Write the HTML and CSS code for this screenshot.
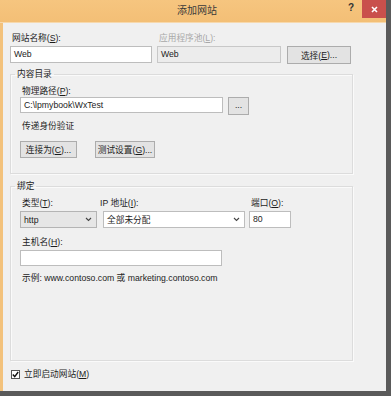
FILE: index.html
```html
<!DOCTYPE html>
<html lang="zh-CN">
<head>
<meta charset="utf-8">
<title>添加网站</title>
<link rel="stylesheet" href="styles.css">
</head>
<body>
<div class="dialog">
  <div class="titlebar">
    <span class="spacer"></span>
    <span class="title">添加网站</span>
    <div class="controls">
      <span class="help">?</span>
      <span class="close"><svg width="7" height="7" viewBox="0 0 7 7"><path d="M1 1L6 6M6 1L1 6" stroke="#fff" stroke-width="1.6"/></svg></span>
    </div>
  </div>
  <div class="body">
    <div class="row1">
      <div class="field">
        <label class="lbl">网站名称(<u>S</u>):</label>
        <div class="input">Web</div>
      </div>
      <div class="field">
        <label class="lbl disabled">应用程序池(<u>L</u>):</label>
        <div class="input gray">Web</div>
      </div>
      <div class="btn choose">选择(<u>E</u>)...</div>
    </div>

    <fieldset class="group g1">
      <legend>内容目录</legend>
      <label class="lbl">物理路径(<u>P</u>):</label>
      <div class="pathrow">
        <div class="input path">C:\lpmybook\WxTest</div>
        <div class="btn dots">...</div>
      </div>
      <div class="lbl auth">传递身份验证</div>
      <div class="btnrow">
        <div class="btn b1">连接为(<u>C</u>)...</div>
        <div class="btn b2">测试设置(<u>G</u>)...</div>
      </div>
    </fieldset>

    <fieldset class="group g2">
      <legend>绑定</legend>
      <div class="bindgrid">
        <label class="lbl">类型(<u>T</u>):</label>
        <label class="lbl ip">IP 地址(<u>I</u>):</label>
        <label class="lbl">端口(<u>O</u>):</label>
        <div class="select gray"><span>http</span><svg width="7" height="5" viewBox="0 0 7 5"><path d="M1 1L3.5 3.5L6 1" fill="none" stroke="#444" stroke-width="1.1"/></svg></div>
        <div class="select"><span>全部未分配</span><svg width="7" height="5" viewBox="0 0 7 5"><path d="M1 1L3.5 3.5L6 1" fill="none" stroke="#444" stroke-width="1.1"/></svg></div>
        <div class="input port">80</div>
      </div>
      <label class="lbl host">主机名(<u>H</u>):</label>
      <div class="input hostin"></div>
      <div class="lbl example">示例: www.contoso.com 或 marketing.contoso.com</div>
    </fieldset>

    <div class="checkrow">
      <span class="check"><svg width="7" height="7" viewBox="0 0 7 7"><path d="M0.8 3.6L2.7 5.6L6.2 1" fill="none" stroke="#111" stroke-width="1.4"/></svg></span>
      <span class="lbl">立即启动网站(<u>M</u>)</span>
    </div>
  </div>
</div>
</body>
</html>
```

FILE: styles.css
```css
* { box-sizing: border-box; }
html, body { margin: 0; padding: 0; background: #f0f0f0; }
body {
  font-family: "Liberation Sans", "Noto Sans CJK SC", sans-serif;
  font-size: 8.7px;
  color: #1c1c1c;
}
u { text-decoration: underline; text-underline-offset: 1px; }

.dialog {
  width: 391px;
  height: 396px;
  display: flex;
  flex-direction: column;
  border-right: 5px solid #5a5a5a;
  border-bottom: 5px solid #5a5a5a;
  background: #f0f0f0;
}

.titlebar {
  height: 23px;
  flex: none;
  display: grid;
  grid-template-columns: 1fr auto 1fr;
  align-items: start;
  background: linear-gradient(#f6c57f, #f3bf76);
  border-bottom: 1px solid #f7d9ad;
}
.title {
  font-size: 10px;
  line-height: 22px;
  color: #3a3a3a;
  padding-left: 8px;
}
.controls {
  justify-self: end;
  display: flex;
  align-items: start;
}
.help {
  font-weight: bold;
  font-size: 10px;
  line-height: 16px;
  color: #333;
  width: 18px;
  text-align: center;
  margin-right: 2px;
}
.close {
  width: 24px;
  height: 18px;
  background: #c9504c;
  display: flex;
  align-items: center;
  justify-content: center;
}

.body {
  flex: 1;
  display: flex;
  flex-direction: column;
  border-left: 3px solid #f3c27c;
  padding: 9px 0 0 7px;
}

.lbl { display: block; line-height: 12px; padding-left: 2px; white-space: nowrap; }
.lbl.disabled { color: #a8a8a8; }

.row1 {
  display: grid;
  grid-template-columns: 142px 124px 65px;
  column-gap: 5px;
  align-items: end;
}
.row1 .choose { margin-left: 1px; margin-bottom: -1px; }
.field { display: flex; flex-direction: column; gap: 2px; }

.input {
  height: 17px;
  border: 1px solid #bdbdbd;
  background: #fff;
  line-height: 15px;
  padding-left: 3px;
  white-space: nowrap;
}
.input.gray { background: #ececec; border-color: #c8c8c8; }

.btn {
  height: 18px;
  border: 1px solid #acacac;
  background: #e3e3e3;
  display: flex;
  align-items: center;
  justify-content: center;
  white-space: nowrap;
}

.group {
  margin: 0;
  width: 343px;
  border: 1px solid #dcdcdc;
  box-shadow: inset 1px 1px 0 #fafafa, 1px 1px 0 #fafafa;
  padding: 0 0 0 9px;
  min-width: 0;
}
.group legend {
  margin-left: -5px;
  padding: 0 2px;
  line-height: 12px;
}
.g1 { margin-top: 5px; padding-top: 5px; padding-bottom: 15px; }
.pathrow { display: flex; gap: 5px; margin-top: 0; }
.path { width: 203px; height: 16px; line-height: 14px; }
.dots { width: 21px; height: 18px; padding-bottom: 3px; }
.auth { margin-top: 5px; }
.btnrow { display: flex; gap: 18px; margin-top: 9px; }
.btnrow .btn { height: 17px; }
.b1 { width: 57px; }
.b2 { width: 60px; }

.g2 { flex: 1; margin-top: 6px; padding-top: 5px; }
.bindgrid {
  display: grid;
  grid-template-columns: 77px 142px 40px;
  column-gap: 6px;
  row-gap: 2px;
  width: 273px;
}
.bindgrid > :nth-child(3), .bindgrid > :nth-child(6) { margin-left: -2px; }
.bindgrid .ip { margin-left: -5px; }
.select {
  height: 17px;
  border: 1px solid #bdbdbd;
  background: #fff;
  display: flex;
  align-items: center;
  justify-content: space-between;
  padding: 0 4px 0 3px;
}
.select.gray { background: #e6e6e6; border-color: #b4b4b4; }
.host { margin-top: 8px; }
.hostin { width: 202px; height: 16px; margin-top: 2px; }
.example { margin-top: 6px; }

.checkrow {
  display: flex;
  align-items: center;
  gap: 2px;
  margin: 7px 0 11px 1px;
  height: 12px;
}
.check {
  width: 9px;
  height: 9px;
  border: 1px solid #555;
  background: #fff;
  display: flex;
  align-items: center;
  justify-content: center;
}
```
